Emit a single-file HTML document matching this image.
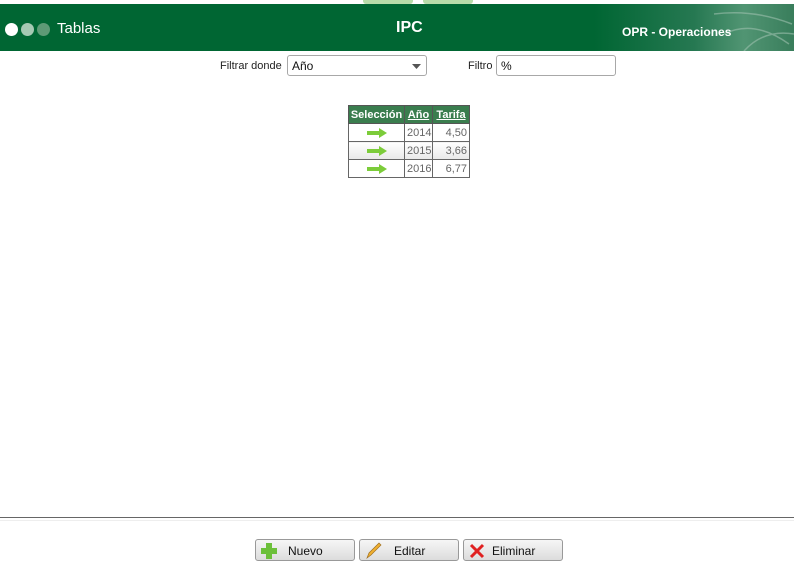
<!DOCTYPE html>
<html><head><meta charset="utf-8">
<style>
body{margin:0;width:794px;height:574px;background:#fff;position:relative;overflow:hidden;font-family:"Liberation Sans",sans-serif;}
.tab{position:absolute;top:0;height:4px;width:50px;background:#b8dcaa;border-radius:0 0 3px 3px}
.hdr{position:absolute;left:0;top:4px;width:794px;height:47px;background:#006633;overflow:hidden}
.bgimg{position:absolute;right:0;top:0;width:200px;height:47px;background:linear-gradient(90deg,#006633 0%,#2a7a55 50%,#5a9a7a 75%,#3f8060 100%);opacity:.9}
.dot{position:absolute;top:19px;width:13px;height:13px;border-radius:50%}
.t{position:absolute;color:#fff}
.lbl{position:absolute;font-size:11px;color:#222}
.inp{position:absolute;border:1px solid #a8a8a8;border-radius:3px;background:#fff;height:21px;box-sizing:border-box;font-size:12px;padding:3px 4px;color:#111}
table{position:absolute;left:348px;top:105px;border-collapse:collapse;font-size:11px;table-layout:fixed;width:122px}
th{background:#3a7d4e;color:#fff;font-weight:bold;height:17px;padding:0 1px;border:1px solid #555;white-space:nowrap}
td{border:1px solid #666;height:17px;color:#666;padding:0 2px;text-align:right}
tr.alt td{background:linear-gradient(#fff,#e8e8e8)}
.arr{display:block;margin:0 auto}
.line{position:absolute;left:0;top:517px;width:794px;height:1px;background:#666}
.line2{position:absolute;left:0;top:520px;width:794px;height:1px;background:#eee}
.btn{position:absolute;top:539px;height:22px;box-sizing:border-box;border:1px solid #999;border-radius:3px;background:linear-gradient(#f6f6f6,#dcdcdc);font-size:12px;color:#111}
.btn span{position:absolute;top:4px}
.btn svg{position:absolute;left:4px;top:2px}
</style></head><body>
<div class="tab" style="left:363px"></div><div class="tab" style="left:423px"></div>
<div class="hdr">
 <div class="bgimg"></div>
 <svg style="position:absolute;right:0;top:0" width="90" height="47"><path d="M10 10 Q50 5 88 20 M20 30 Q50 15 85 40 M40 47 Q60 25 90 30" stroke="#9cc0ae" stroke-width="1.5" fill="none" opacity=".6"/></svg>
 <div class="dot" style="left:5px;background:#fff"></div>
 <div class="dot" style="left:21px;background:#a5c9b3"></div>
 <div class="dot" style="left:37px;background:#5e9a76"></div>
 <div class="t" style="left:57px;top:16px;font-size:15px">Tablas</div>
 <div class="t" style="left:396px;top:15px;font-size:16px;font-weight:bold">IPC</div>
 <div class="t" style="left:622px;top:21px;font-size:12px;font-weight:bold">OPR - Operaciones</div>
</div>
<div class="lbl" style="left:220px;top:60px">Filtrar donde</div>
<div class="inp" style="left:287px;top:55px;width:140px">Año</div>
<svg style="position:absolute;left:412px;top:64px" width="9" height="5"><path d="M0 0H9L4.5 5Z" fill="#555"/></svg>
<div class="lbl" style="left:468px;top:60px">Filtro</div>
<div class="inp" style="left:496px;top:55px;width:120px">%</div>
<table>
<col style="width:56px"><col style="width:28px"><col style="width:37px">
<tr><th>Selección</th><th><u>Año</u></th><th><u>Tarifa</u></th></tr>
<tr><td><svg class="arr" width="20" height="10"><path d="M0 3H12V0L20 5L12 10V7H0Z" fill="#7ccc3a"/></svg></td><td>2014</td><td>4,50</td></tr>
<tr class="alt"><td><svg class="arr" width="20" height="10"><path d="M0 3H12V0L20 5L12 10V7H0Z" fill="#7ccc3a"/></svg></td><td>2015</td><td>3,66</td></tr>
<tr><td><svg class="arr" width="20" height="10"><path d="M0 3H12V0L20 5L12 10V7H0Z" fill="#7ccc3a"/></svg></td><td>2016</td><td>6,77</td></tr>
</table>
<div class="line"></div><div class="line2"></div>
<div class="btn" style="left:255px;width:100px"><svg width="18" height="18"><path d="M6 1H12V6H17V12H12V17H6V12H1V6H6Z" fill="#6cc03a"/></svg><span style="left:32px">Nuevo</span></div>
<div class="btn" style="left:359px;width:100px"><svg width="18" height="18"><path d="M3 16L5 11L15 1L17 3L7 13Z" fill="#f0b030" stroke="#a07020" stroke-width=".7"/></svg><span style="left:34px">Editar</span></div>
<div class="btn" style="left:463px;width:100px"><svg width="18" height="18"><path d="M3 3L15 15M15 3L3 15" stroke="#e02020" stroke-width="3"/></svg><span style="left:28px">Eliminar</span></div>
</body></html>
